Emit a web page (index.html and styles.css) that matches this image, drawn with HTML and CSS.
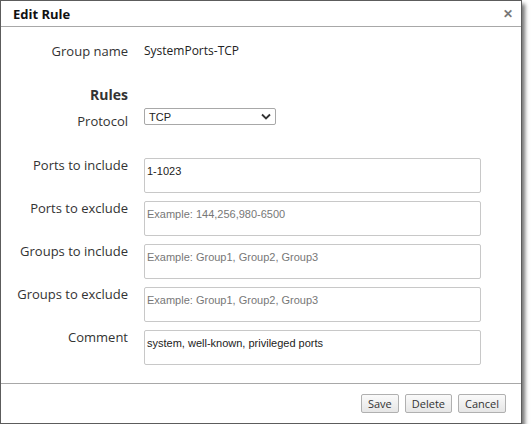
FILE: index.html
```html
<!DOCTYPE html>
<html>
<head>
<meta charset="utf-8">
<title>Edit Rule</title>
<link rel="stylesheet" href="styles.css">
</head>
<body>
<div class="dialog">
    <div class="dialog-header">
        <span class="dialog-title">Edit Rule</span>
        <span class="dialog-close">&#x2715;</span>
    </div>

    <div class="dialog-body">
        <div class="row row-name">
            <label>Group name</label>
            <span class="value">SystemPorts-TCP</span>
        </div>

        <div class="row row-heading">
            <label class="heading">Rules</label>
        </div>

        <div class="row row-protocol">
            <label>Protocol</label>
            <div class="select">
                <span>TCP</span>
                <svg width="10" height="7" viewBox="0 0 10 7"><path d="M1 1.5 L5 5.5 L9 1.5" fill="none" stroke="#333" stroke-width="1.8"/></svg>
            </div>
        </div>

        <div class="fields">
            <div class="row">
                <label>Ports to include</label>
                <textarea>1-1023</textarea>
            </div>
            <div class="row">
                <label>Ports to exclude</label>
                <textarea placeholder="Example: 144,256,980-6500"></textarea>
            </div>
            <div class="row">
                <label>Groups to include</label>
                <textarea placeholder="Example: Group1, Group2, Group3"></textarea>
            </div>
            <div class="row">
                <label>Groups to exclude</label>
                <textarea placeholder="Example: Group1, Group2, Group3"></textarea>
            </div>
            <div class="row">
                <label>Comment</label>
                <textarea>system, well-known, privileged ports</textarea>
            </div>
        </div>
    </div>

    <div class="dialog-footer">
        <button>Save</button>
        <button>Delete</button>
        <button>Cancel</button>
    </div>
</div>
</body>
</html>
```

FILE: styles.css
```css
body {
    margin: 0;
    background: #ffffff;
    font-family: "Open Sans", "Noto Sans", sans-serif;
}

.dialog {
    width: 520px;
    height: 422px;
    border: 1px solid #5c5c5c;
    background: white;
    box-shadow: 3px 4px 4px rgba(0, 0, 0, 0.55);
    display: flex;
    flex-direction: column;
}

.dialog-header {
    height: 25px;
    border-bottom: 1px solid #a8a8a8;
    display: flex;
    align-items: center;
    justify-content: space-between;
    padding: 0 8px 0 12px;
}

.dialog-title {
    font-weight: bold;
    font-size: 13px;
    color: #111;
}

.dialog-close {
    font-size: 12px;
    color: #777;
    font-weight: bold;
}

.dialog-body {
    flex: 1;
    padding-top: 15px;
}

.row {
    display: flex;
    align-items: flex-start;
}

.row label {
    width: 127px;
    text-align: right;
    font-size: 13px;
    color: #333;
    line-height: 18px;
    margin-right: 16px;
}

.row .value {
    font-size: 12px;
    color: #222;
    line-height: 18px;
}

.row-heading {
    margin-top: 26px;
}

.row label.heading {
    font-weight: bold;
    font-size: 14px;
}

.row-protocol {
    margin-top: 4px;
    align-items: flex-start;
}

.row-protocol label {
    margin-top: 4px;
}

.select {
    height: 15px;
    border: 1px solid #a8a8a8;
    border-radius: 2px;
    display: flex;
    align-items: center;
    justify-content: space-between;
    padding: 0 4px;
    width: 122px;
    font-family: "Liberation Sans", sans-serif;
    font-size: 11px;
    color: #222;
}

.fields {
    margin-top: 28px;
    display: flex;
    flex-direction: column;
    gap: 8px;
}

.fields label {
    margin-top: -2px;
}

textarea {
    width: 337px;
    height: 35px;
    box-sizing: border-box;
    border: 1px solid #c8c8c8;
    border-radius: 2px;
    padding: 6px 2px 2px;
    resize: none;
    font-family: "Liberation Sans", sans-serif;
    font-size: 11px;
    color: #222;
    outline: none;
}

textarea::placeholder {
    color: #777;
}

.dialog-footer {
    height: 40px;
    border-top: 1px solid #a8a8a8;
    display: flex;
    justify-content: flex-end;
    align-items: flex-start;
    gap: 6px;
    padding: 10px 15px 0 0;
    box-sizing: border-box;
}

.dialog-footer button {
    height: 19px;
    padding: 0 6px;
    border: 1px solid #b0b0b0;
    border-radius: 2px;
    background: linear-gradient(#fafafa, #e6e6e6);
    font-family: "Open Sans", sans-serif;
    font-size: 11px;
    color: #333;
}
```
